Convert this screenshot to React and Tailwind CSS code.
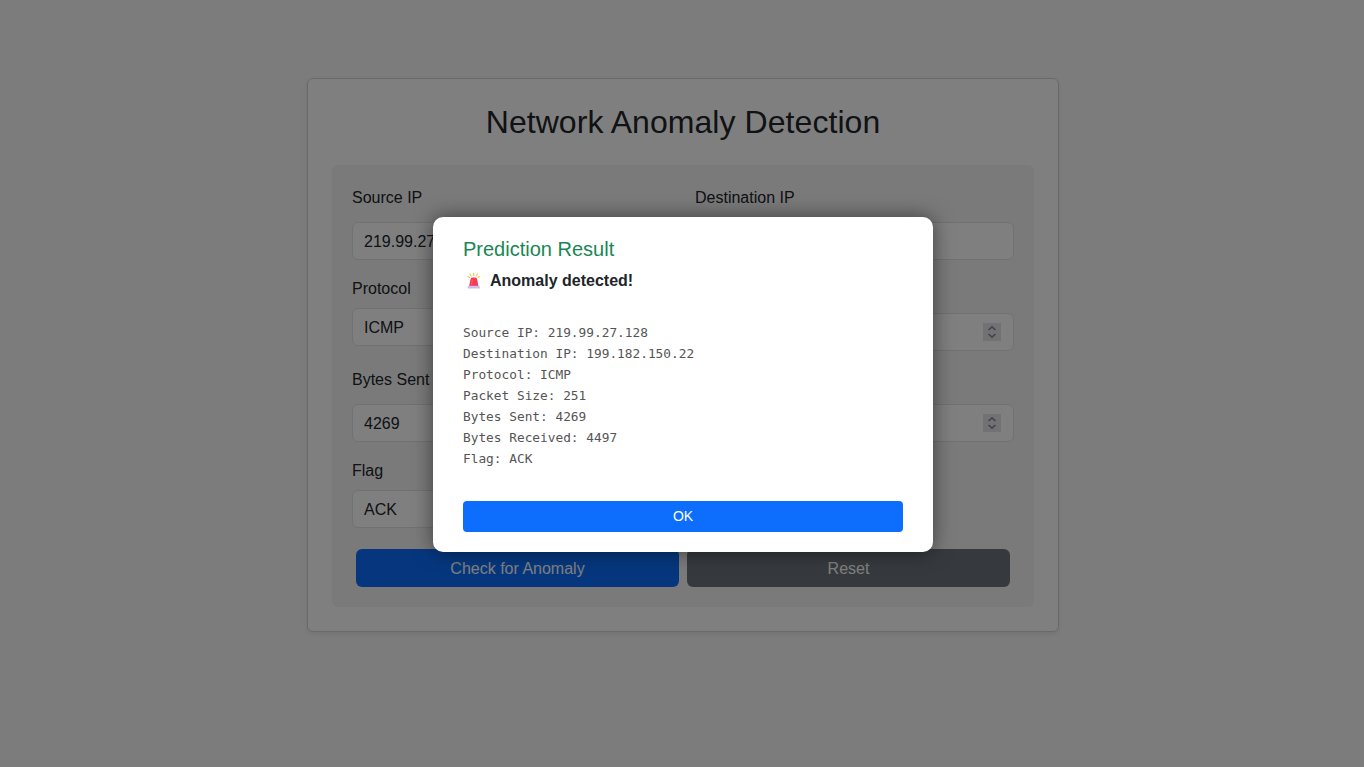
const RESULT = `Source IP: 219.99.27.128
Destination IP: 199.182.150.22
Protocol: ICMP
Packet Size: 251
Bytes Sent: 4269
Bytes Received: 4497
Flag: ACK`;

function Spinner() {
  return (
    <svg width="18" height="18" viewBox="0 0 18 18" fill="none" className="bg-[#e5e5ea]">
      <path d="M5.5 7 L9 3.8 L12.5 7 M5.5 11 L9 14.2 L12.5 11" stroke="#8a8a92" strokeWidth="1.6" />
    </svg>
  );
}

function Field({ label, value = "", kind = "input" }) {
  return (
    <div className="h-[91px]">
      <div className="h-6 pt-px leading-6">{label}</div>
      <div
        className={
          "flex h-[38px] items-center justify-between rounded-md border border-[#dee2e6] bg-white px-3 " +
          (kind === "select" ? "mt-2" : "mt-[13px]")
        }
      >
        <span className="-ml-px pt-0.5">{value}</span>
        {kind === "number" && <Spinner />}
      </div>
    </div>
  );
}

function Siren() {
  return (
    <svg width="16" height="18" viewBox="0 0 16 18" fill="none">
      <path d="M7.7 1 V3.4 M3.8 1.8 L5.2 4 M11.6 1.8 L10.2 4 M1.8 4.6 L3.6 5.6 M13.7 4.6 L11.9 5.6" stroke="#fbc95a" strokeWidth="1.2" strokeLinecap="round" />
      <path d="M3.2 14 L4.3 8 Q4.7 5.6 6.4 5.6 H9.2 Q10.9 5.6 11.3 8 L12.4 14 Z" fill="#f63b55" />
      <path d="M5.5 12 L6.3 8" stroke="#fb6075" strokeWidth="1.1" strokeLinecap="round" />
      <path d="M1.7 16.5 V15.2 Q1.7 13.8 3.1 13.8 H12.5 Q13.9 13.8 13.9 15.2 V16.5 Z" fill="#cfbfe6" />
    </svg>
  );
}

export default function App() {
  return (
    <div className="relative h-[767px] overflow-hidden bg-[#f8f8f8] pt-[78px] font-['Liberation_Sans',Arial,sans-serif] text-base text-[#212529]">
      <main className="mx-auto h-[554px] w-[752px] translate-x-px rounded-md border border-[#d3d3d3] bg-white p-6 shadow-[0_2px_4px_rgba(0,0,0,0.075)]">
        <h2 className="mb-6 text-center text-[32px] leading-[38.4px] tracking-[0.06px]">Network Anomaly Detection</h2>
        <form className="h-[442px] rounded-md bg-[#f4f4f4] p-5">
          <div className="grid grid-cols-2 gap-x-6">
            <Field label="Source IP" value="219.99.27.128" />
            <Field label="Destination IP" value="199.182.150.22" />
            <Field label="Protocol" value="ICMP" kind="select" />
            <Field label="Packet Size" value="251" kind="number" />
            <Field label="Bytes Sent" value="4269" kind="number" />
            <Field label="Bytes Received" value="4497" kind="number" />
            <Field label="Flag" value="ACK" kind="select" />
          </div>
          <div className="flex gap-2 px-1">
            <button type="button" className="h-[38px] flex-1 rounded-md bg-[#0d6efd] pt-0.5 text-white">Check for Anomaly</button>
            <button type="button" className="h-[38px] flex-1 rounded-md bg-[#6c757d] pt-0.5 text-white">Reset</button>
          </div>
        </form>
      </main>

      <div className="absolute inset-0 flex items-start justify-center bg-black/50 pt-[217px]">
        <section className="h-[335px] w-[500px] translate-x-px rounded-[10px] bg-white px-[30px] pt-5 shadow-[0_0_20px_rgba(0,0,0,0.5)]">
          <h5 className="text-xl leading-6 text-[#198754]">Prediction Result</h5>
          <div className="mt-2 flex h-6 items-center">
            <span className="ml-[3px]"><Siren /></span>
            <strong className="ml-2 font-bold leading-6">Anomaly detected!</strong>
          </div>
          <pre className="mt-[29px] h-[147px] font-['DejaVu_Sans_Mono',monospace] text-[12.8px] leading-[21px] text-[#555]">{RESULT}</pre>
          <button type="button" className="mt-8 h-[31px] w-full rounded bg-[#0d6efd] pb-0.5 text-sm text-white">OK</button>
        </section>
      </div>
    </div>
  );
}
